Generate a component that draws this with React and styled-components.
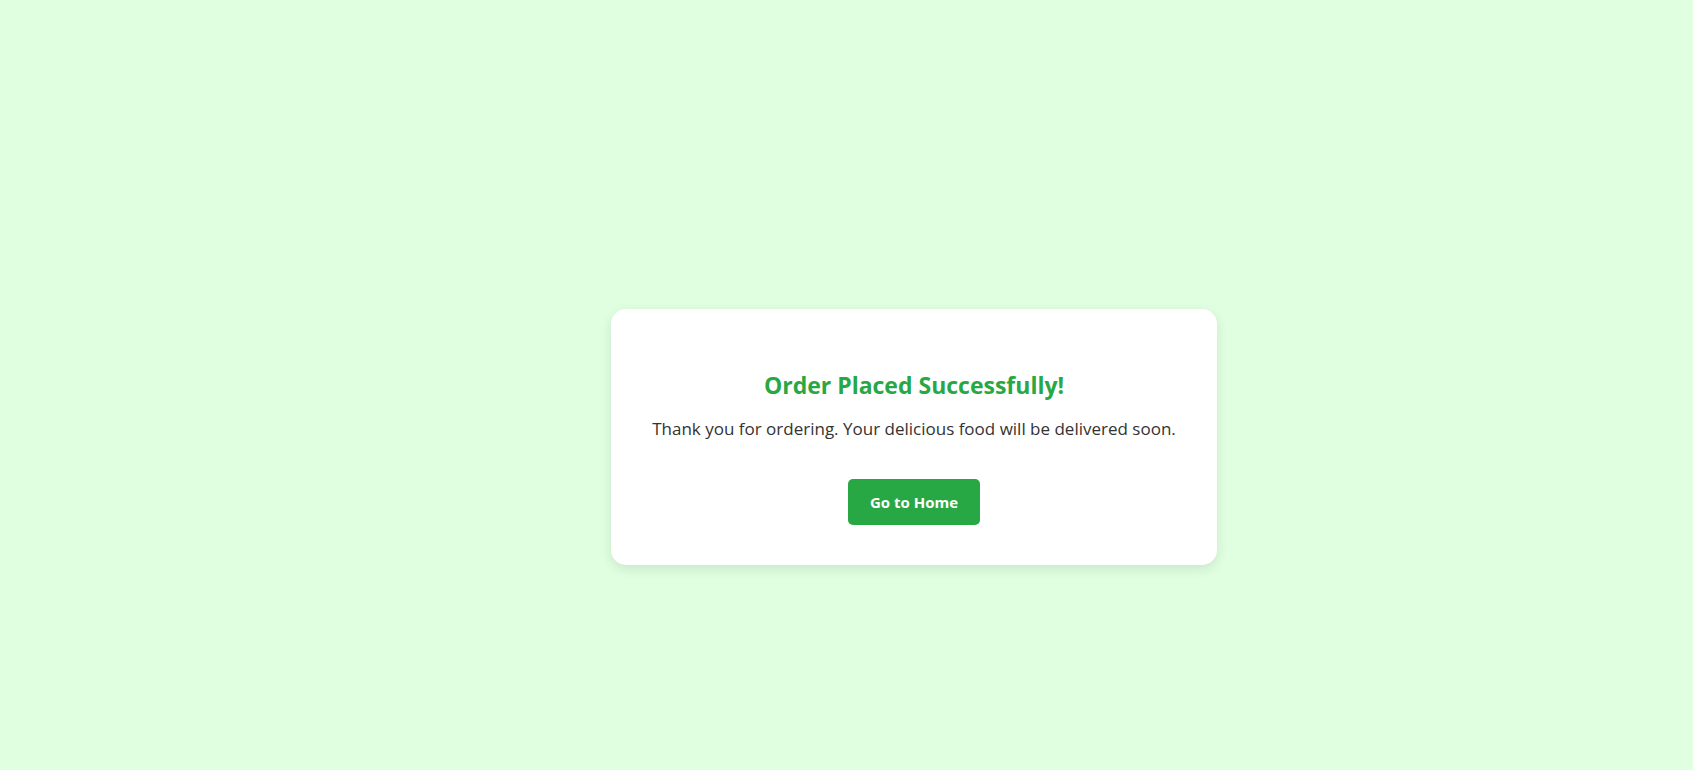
import React from 'react'
import styled, { createGlobalStyle } from 'styled-components'

const GlobalStyle = createGlobalStyle`
  html, body {
    margin: 0;
    padding: 0;
    background: #e0ffe0;
    font-family: "Open Sans", "Noto Sans", sans-serif;
  }
`

const Page = styled.div`
  min-height: 770px;
  box-sizing: border-box;
  display: flex;
  justify-content: center;
  align-items: flex-start;
  padding: 309px 0 0 135px;
`

const Card = styled.div`
  width: 606px;
  box-sizing: border-box;
  background: #ffffff;
  border-radius: 15px;
  box-shadow: 0 4px 12px rgba(0, 0, 0, 0.1);
  padding: 40px;
  display: flex;
  flex-direction: column;
  align-items: center;
  text-align: center;
`

const Title = styled.h2`
  margin: 20px 0 0;
  font-size: 23px;
  line-height: 32px;
  font-weight: 700;
  color: #28a745;
`

const Message = styled.p`
  margin: 16px 0 0;
  font-size: 17px;
  line-height: 24px;
  color: #333333;
`

const HomeButton = styled.button`
  margin-top: 38px;
  height: 46px;
  padding: 0 22px;
  border: none;
  border-radius: 5px;
  background: #28a745;
  color: #ffffff;
  font-family: inherit;
  font-size: 15px;
  font-weight: 700;
  cursor: pointer;
`

export default function App() {
  return (
    <>
      <GlobalStyle />
      <Page>
        <Card>
          <Title>Order Placed Successfully!</Title>
          <Message>Thank you for ordering. Your delicious food will be delivered soon.</Message>
          <HomeButton>Go to Home</HomeButton>
        </Card>
      </Page>
    </>
  )
}
